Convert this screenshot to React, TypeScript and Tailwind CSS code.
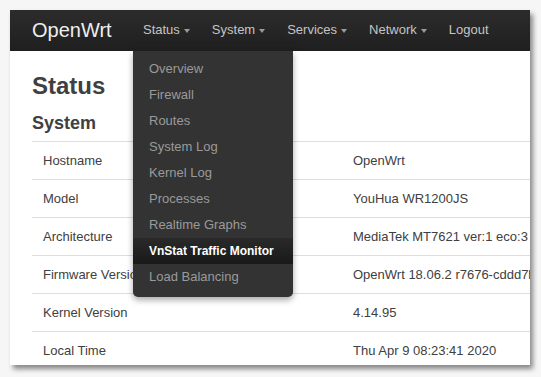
const navItems = [
  { label: "Status", caret: true },
  { label: "System", caret: true },
  { label: "Services", caret: true },
  { label: "Network", caret: true },
  { label: "Logout", caret: false },
]

const menuItems = [
  "Overview",
  "Firewall",
  "Routes",
  "System Log",
  "Kernel Log",
  "Processes",
  "Realtime Graphs",
  "VnStat Traffic Monitor",
  "Load Balancing",
]

const rows = [
  ["Hostname", "OpenWrt"],
  ["Model", "YouHua WR1200JS"],
  ["Architecture", "MediaTek MT7621 ver:1 eco:3"],
  ["Firmware Version", "OpenWrt 18.06.2 r7676-cddd7b4c77"],
  ["Kernel Version", "4.14.95"],
  ["Local Time", "Thu Apr 9 08:23:41 2020"],
]

function Caret() {
  return (
    <span className="ml-[4px] inline-block w-0 h-0 border-l-[3.5px] border-r-[3.5px] border-t-[4px] border-l-transparent border-r-transparent border-t-[#9a9a9a] translate-y-[1px]" />
  )
}

function App() {
  const active = "VnStat Traffic Monitor"

  return (
    <div
      className="w-[541px] h-[377px] bg-[#f6f6f6] pl-[10px] pt-[10px] overflow-hidden"
      style={{ fontFamily: '"Liberation Sans", Arial, sans-serif' }}
    >
      <div className="relative w-[520px] h-[355px] bg-white overflow-hidden shadow-[3px_4px_5px_rgba(0,0,0,0.45)]">

        {/* navbar */}
        <div className="h-[41px] flex items-center bg-gradient-to-b from-[#2c2c2c] to-[#1f1f1f]">
          <div className="w-[122px] shrink-0 pl-[22px] text-[20px] leading-none text-[#eeeeee] -translate-y-[1px]">
            OpenWrt
          </div>
          <div className="flex items-center">
            {navItems.map((item) => (
              <div
                key={item.label}
                className="px-[11px] flex items-center text-[13px] text-[#c4c4c4] -translate-y-[1px]"
              >
                {item.label}
                {item.caret && <Caret />}
              </div>
            ))}
          </div>
        </div>

        {/* content */}
        <div className="pl-[22px] pt-[21px] text-[#404040]">
          <h2 className="text-[24px] leading-[28px] font-bold">Status</h2>
          <h3 className="mt-[12px] text-[18px] leading-[22px] font-bold">System</h3>

          <div className="mt-[7px] w-[498px]">
            {rows.map(([label, value]) => (
              <div
                key={label}
                className="h-[38px] border-t border-[#dddddd] flex items-center text-[13px] whitespace-nowrap"
              >
                <div className="w-[321px] shrink-0 pl-[11px]">{label}</div>
                <div>{value}</div>
              </div>
            ))}
          </div>
        </div>

        {/* dropdown */}
        <div className="absolute left-[123px] top-[41px] w-[160px] h-[246px] bg-[#333333] rounded-b-[5px] pt-[5px] shadow-[0_3px_6px_rgba(0,0,0,0.35)]">
          {menuItems.map((m) =>
            m === active ? (
              <div
                key={m}
                className="h-[26px] pl-[16px] flex items-center text-[12px] font-bold text-white bg-gradient-to-b from-[#2a2a2a] to-[#191919]"
              >
                {m}
              </div>
            ) : (
              <div
                key={m}
                className="h-[26px] pl-[16px] flex items-center text-[13px] text-[#9a9a9a]"
              >
                {m}
              </div>
            )
          )}
        </div>

      </div>
    </div>
  )
}

export default App
